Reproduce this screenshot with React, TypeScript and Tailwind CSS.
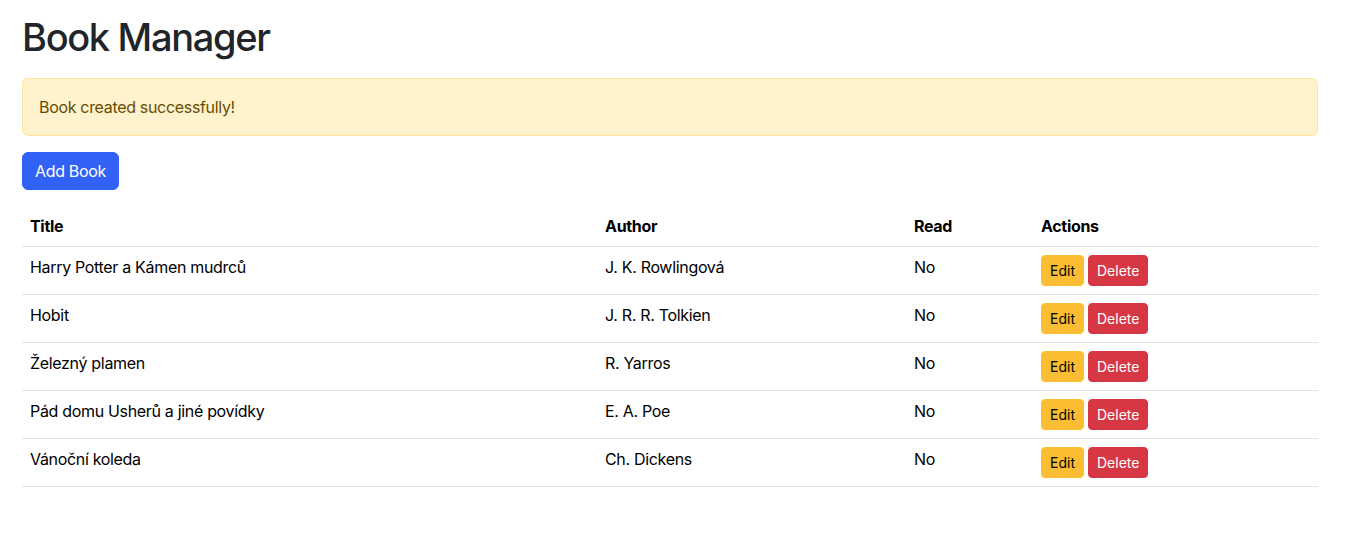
const books = [
  { title: "Harry Potter a Kámen mudrců", author: "J. K. Rowlingová", read: false },
  { title: "Hobit", author: "J. R. R. Tolkien", read: false },
  { title: "Železný plamen", author: "R. Yarros", read: false },
  { title: "Pád domu Usherů a jiné povídky", author: "E. A. Poe", read: false },
  { title: "Vánoční koleda", author: "Ch. Dickens", read: false },
];

function BookRow(props: { title: string; author: string; read: boolean }) {
  return (
    <tr className="border-b border-[#dee2e6]">
      <td className="px-2 py-2 align-top">{props.title}</td>
      <td className="px-2 py-2 align-top">{props.author}</td>
      <td className="px-2 py-2 align-top">{props.read ? "Yes" : "No"}</td>
      <td className="px-2 py-2 align-top">
        <div className="flex gap-1 tracking-normal">
          <button className="rounded-[4px] border border-[#fbbd32] bg-[#fbbd32] px-2 py-1 text-[14px] leading-[21px] text-black">
            Edit
          </button>
          <button className="rounded-[4px] border border-[#d63743] bg-[#d63743] px-2 py-1 text-[14px] leading-[21px] text-white">
            Delete
          </button>
        </div>
      </td>
    </tr>
  );
}

export default function App() {
  return (
    <div className="min-h-screen bg-white font-['Inter',sans-serif] text-[16px] leading-6 tracking-[-0.02em] text-[#212529]">
      <div className="ml-[22px] w-[1296px] pt-[13px]">
        <h1 className="mb-[17px] text-[38px] font-medium leading-[48px] tracking-[-0.035em]">Book Manager</h1>

        <div className="mb-4 rounded-[6px] border border-[#ffe69c] bg-[#fff3cd] p-4 text-[#664d03]">
          Book created successfully!
        </div>

        <button className="rounded-[6px] border border-[#3161f5] bg-[#3161f5] px-3 py-1.5 text-white">
          Add Book
        </button>

        <table className="mt-4 w-full border-collapse text-black">
          <thead>
            <tr className="border-b border-[#dee2e6]">
              <th className="w-[575px] px-2 py-2 text-left font-bold">Title</th>
              <th className="w-[309px] px-2 py-2 text-left font-bold">Author</th>
              <th className="w-[127px] px-2 py-2 text-left font-bold">Read</th>
              <th className="px-2 py-2 text-left font-bold">Actions</th>
            </tr>
          </thead>
          <tbody>
            {books.map((b) => (
              <BookRow key={b.title} {...b} />
            ))}
          </tbody>
        </table>
      </div>
    </div>
  );
}
